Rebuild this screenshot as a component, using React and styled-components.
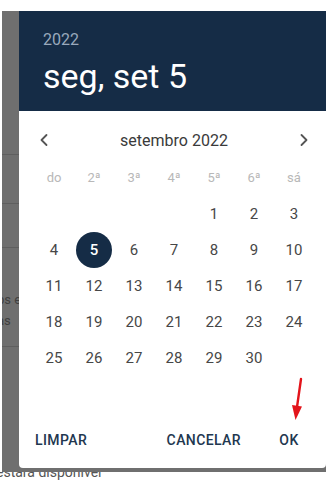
import React from 'react'
import styled, { createGlobalStyle } from 'styled-components'
import { ChevronLeft, ChevronRight } from 'lucide-react'

const GlobalStyle = createGlobalStyle`
    html, body {
        margin: 0;
        padding: 0;
        background: #ffffff;
        font-family: Roboto, "Liberation Sans", Arial, sans-serif;
    }
`

const Pagina = styled.div`
    width: 333px;
    height: 495px;
    overflow: hidden;
    background: #ffffff;
`

const Tela = styled.div`
    display: flex;
    width: 324px;
    height: 461px;
    margin: 11px 0 0 2px;
    background: #6f6f6f;
`

const FaixaFundo = styled.div`
    width: 17px;
    display: flex;
    flex-direction: column;
    overflow: hidden;
`

const LinhaFundo = styled.div`
    height: ${props => props.altura}px;
    flex-shrink: 0;
    border-bottom: 1px solid #5f5f5f;
    box-sizing: border-box;
    padding-top: ${props => props.recuo || 0}px;
`

const TextoFundo = styled.div`
    margin-left: -5px;
    white-space: nowrap;
    font-size: 13px;
    line-height: 21px;
    color: #3f3f3f;
`

const Dialogo = styled.div`
    position: relative;
    width: 307px;
    height: 457px;
    background: #ffffff;
    border-radius: 0 0 4px 4px;
    display: flex;
    flex-direction: column;
    overflow: hidden;
`

const Cabecalho = styled.div`
    height: 100px;
    background: #152c46;
    padding: 20px 24px 0 24px;
    box-sizing: border-box;
`

const Ano = styled.div`
    font-size: 16px;
    line-height: 18px;
    color: #9aa9bc;
`

const DataSelecionada = styled.div`
    margin-top: 7px;
    font-size: 34px;
    line-height: 40px;
    color: #ffffff;
`

const Corpo = styled.div`
    flex: 1;
    padding: 9px 12px 0 15px;
`

const LinhaMes = styled.div`
    height: 40px;
    display: flex;
    align-items: center;
    justify-content: space-between;
`

const BotaoSeta = styled.button`
    border: none;
    background: none;
    padding: 0;
    width: 20px;
    height: 24px;
    display: flex;
    align-items: center;
    justify-content: center;
    color: #555555;
`

const NomeMes = styled.div`
    font-size: 16px;
    color: #3a3a3a;
`

const Grade = styled.div`
    display: grid;
    grid-template-columns: repeat(7, 40px);
    grid-auto-rows: 36px;
    align-items: center;
    justify-items: center;
`

const DiaSemana = styled.div`
    font-size: 13px;
    color: #b8b8b8;
    height: 38px;
    line-height: 38px;
`

const Dia = styled.div`
    width: 36px;
    height: 36px;
    border-radius: 50%;
    display: flex;
    align-items: center;
    justify-content: center;
    font-size: 15px;
    font-weight: ${props => (props.selecionado ? 500 : 400)};
    color: ${props => (props.selecionado ? '#ffffff' : '#474747')};
    background: ${props => (props.selecionado ? '#152c46' : 'transparent')};
`

const Acoes = styled.div`
    display: flex;
    align-items: center;
    padding: 0 5px 10px 8px;
`

const BotaoAcao = styled.button`
    min-width: 64px;
    height: 36px;
    padding: 0 8px;
    border: none;
    background: none;
    font-family: Roboto, "Liberation Sans", Arial, sans-serif;
    font-size: 14px;
    font-weight: 500;
    letter-spacing: 0.4px;
    text-transform: uppercase;
    color: #22374f;
    margin-left: ${props => (props.empurra ? 'auto' : props.espaco ? '8px' : '0')};
`

const Seta = styled.svg`
    position: absolute;
    left: 268px;
    top: 364px;
`

const RodapeCortado = styled.div`
    height: 8px;
    overflow: hidden;
`

const TextoRodape = styled.div`
    margin: -8px 0 0 -4px;
    font-size: 14px;
    line-height: 16px;
    color: #555555;
    white-space: nowrap;
`

const diasSemana = ['do', '2ª', '3ª', '4ª', '5ª', '6ª', 'sá']

const dias = [null, null, null, null, 1, 2, 3]
for (let d = 4; d <= 30; d++) dias.push(d)

export default function App() {
    return (
        <Pagina>
            <GlobalStyle />
            <Tela>
                <FaixaFundo>
                    <LinhaFundo altura={144} />
                    <LinhaFundo altura={49} />
                    <LinhaFundo altura={44} />
                    <LinhaFundo altura={99} recuo={41}>
                        <TextoFundo>ps e</TextoFundo>
                        <TextoFundo>as</TextoFundo>
                    </LinhaFundo>
                </FaixaFundo>
                <Dialogo>
                    <Cabecalho>
                        <Ano>2022</Ano>
                        <DataSelecionada>seg, set 5</DataSelecionada>
                    </Cabecalho>
                    <Corpo>
                        <LinhaMes>
                            <BotaoSeta><ChevronLeft size={22} strokeWidth={2.2} /></BotaoSeta>
                            <NomeMes>setembro 2022</NomeMes>
                            <BotaoSeta><ChevronRight size={22} strokeWidth={2.2} /></BotaoSeta>
                        </LinhaMes>
                        <Grade>
                            {diasSemana.map(d => (
                                <DiaSemana key={d}>{d}</DiaSemana>
                            ))}
                            {dias.map((d, i) =>
                                d ? (
                                    <Dia key={i} selecionado={d === 5}>{d}</Dia>
                                ) : (
                                    <span key={i} />
                                )
                            )}
                        </Grade>
                    </Corpo>
                    <Acoes>
                        <BotaoAcao>Limpar</BotaoAcao>
                        <BotaoAcao empurra>Cancelar</BotaoAcao>
                        <BotaoAcao espaco>OK</BotaoAcao>
                    </Acoes>
                    <Seta width="20" height="48" viewBox="0 0 20 48">
                        <line x1="14" y1="4" x2="10" y2="32" stroke="#e3141b" strokeWidth="2.4" strokeLinecap="round" />
                        <polygon points="5,30 15,31.5 8.5,45" fill="#e3141b" />
                    </Seta>
                </Dialogo>
            </Tela>
            <RodapeCortado>
                <TextoRodape>estará disponível</TextoRodape>
            </RodapeCortado>
        </Pagina>
    )
}
